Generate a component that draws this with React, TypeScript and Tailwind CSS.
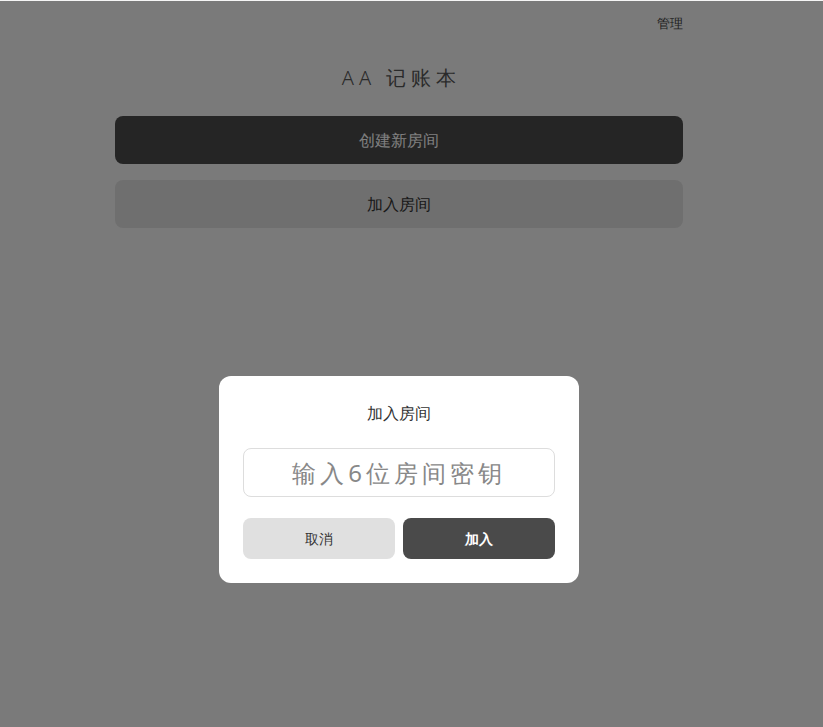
export default function App() {
  return (
    <div className="relative min-h-screen bg-[#f5f5f5] font-sans">
      <div className="w-[798px]">
        <main className="mx-auto w-[568px] pt-[13px]">
          <div className="flex justify-end">
            <button type="button" className="text-[13px] leading-5 text-[#444]">
              管理
            </button>
          </div>
          <h1 className="mt-[31px] pl-[5px] text-center text-[20px] font-light leading-7 tracking-[5px] text-[#555]">
            AA 记账本
          </h1>
          <div className="mt-[24px] flex flex-col gap-[16px]">
            <button
              type="button"
              className="h-[48px] rounded-lg bg-[#4a4a4a] text-[16px] text-white"
            >
              创建新房间
            </button>
            <button
              type="button"
              className="h-[48px] rounded-lg bg-[#dedede] text-[16px] text-[#333]"
            >
              加入房间
            </button>
          </div>
        </main>
      </div>

      <div className="fixed inset-x-0 bottom-0 top-px bg-black/50">
        <div className="flex w-[798px] justify-center pt-[375px]">
          <div className="w-[360px] rounded-xl bg-white px-6 pb-6 pt-[25px]">
            <h2 className="text-center text-[16px] leading-6 text-[#333]">加入房间</h2>
            <input
              type="text"
              placeholder="输入6位房间密钥"
              className="mt-[23px] h-[49px] w-full rounded-lg border border-[#dddddd] text-center text-[24px] tracking-[4px] text-[#333] outline-none placeholder:text-[#888]"
            />
            <div className="mt-[21px] flex gap-2">
              <button
                type="button"
                className="h-[41px] flex-1 rounded-lg bg-[#e0e0e0] text-[14px] text-[#333]"
              >
                取消
              </button>
              <button
                type="button"
                className="h-[41px] flex-1 rounded-lg bg-[#4a4a4a] text-[14px] font-semibold text-white"
              >
                加入
              </button>
            </div>
          </div>
        </div>
      </div>
    </div>
  );
}
